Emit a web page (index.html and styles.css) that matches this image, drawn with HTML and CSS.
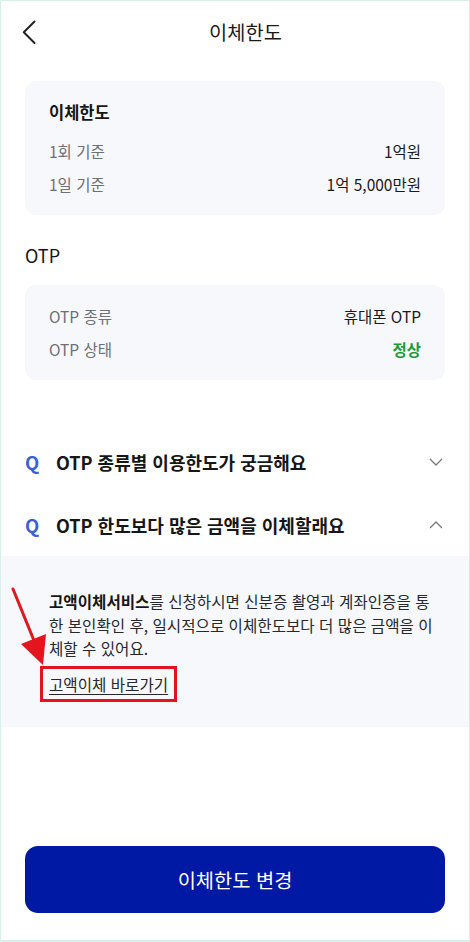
FILE: index.html
```html
<!DOCTYPE html>
<html lang="ko">
<head>
<meta charset="utf-8">
<title>이체한도</title>
<link rel="stylesheet" href="styles.css">
</head>
<body>
<div class="frame">
  <header class="topbar">
    <svg class="back" width="14" height="25" viewBox="0 0 14 25"><path d="M12.5 1.5 L1.8 12.2 L12.5 23" fill="none" stroke="#222" stroke-width="2" stroke-linecap="round" stroke-linejoin="round"/></svg>
    <h1 class="title">이체한도</h1>
    <span></span>
  </header>

  <section class="card card-limit">
    <h2 class="card-title">이체한도</h2>
    <div class="row"><span class="label">1회 기준</span><span class="value">1억원</span></div>
    <div class="row"><span class="label">1일 기준</span><span class="value">1억 5,000만원</span></div>
  </section>

  <h2 class="section-title">OTP</h2>
  <section class="card card-otp">
    <div class="row"><span class="label">OTP 종류</span><span class="value">휴대폰 OTP</span></div>
    <div class="row"><span class="label">OTP 상태</span><span class="value ok">정상</span></div>
  </section>

  <div class="faq">
    <div class="q-row">
      <span class="q">Q</span><span class="q-text">OTP 종류별 이용한도가 궁금해요</span>
      <svg class="chev" width="14" height="8" viewBox="0 0 14 8"><path d="M1 1 L7 7 L13 1" fill="none" stroke="#7a7d84" stroke-width="1.4"/></svg>
    </div>
    <div class="q-row">
      <span class="q">Q</span><span class="q-text">OTP 한도보다 많은 금액을 이체할래요</span>
      <svg class="chev" width="14" height="8" viewBox="0 0 14 8"><path d="M1 7 L7 1 L13 7" fill="none" stroke="#7a7d84" stroke-width="1.4"/></svg>
    </div>
    <div class="answer">
      <p class="answer-text"><b>고액이체서비스</b>를 신청하시면 신분증 촬영과 계좌인증을 통한 본인확인 후, 일시적으로 이체한도보다 더 많은 금액을 이체할 수 있어요.</p>
      <span class="highlight"><a class="link" href="#">고액이체 바로가기</a></span>
    </div>
  </div>

  <button class="primary" type="button">이체한도 변경</button>

  <svg class="arrow" width="60" height="90" viewBox="0 0 60 90"><line x1="12" y1="8" x2="34" y2="62" stroke="#e3161d" stroke-width="3" stroke-linecap="round"/><polygon points="42,84 20,63 45,53" fill="#e3161d"/></svg>
</div>
</body>
</html>
```

FILE: styles.css
```css
* { box-sizing: border-box; }
html, body { margin: 0; padding: 0; background: #fff; }
body {
  font-family: "Noto Sans CJK KR", "Noto Sans", sans-serif;
  color: #161616;
}
.frame {
  position: relative;
  width: 470px;
  height: 942px;
  border: 1px solid #d6f1ec;
  border-bottom-width: 2px;
  display: flex;
  flex-direction: column;
  padding-bottom: 27px;
}
.topbar {
  height: 62px;
  display: grid;
  grid-template-columns: 1fr auto 1fr;
  align-items: center;
  padding-left: 21px;
}
.back { display: block; }
.title {
  margin: 0;
  font-size: 19.8px;
  font-weight: 400;
  line-height: 24px;
  color: #1a1a1a;
}
.card {
  margin: 0 24px;
  background: #f6f8fc;
  border-radius: 11px;
  padding: 14.5px 24px;
}
.card-limit {
  margin-top: 18px;
  padding-top: 19px;
}
.card-title {
  margin: 0 0 10.5px;
  font-size: 16.5px;
  font-weight: 700;
  line-height: 24px;
}
.row {
  display: flex;
  justify-content: space-between;
  align-items: center;
  height: 33px;
  font-size: 15.5px;
}
.label { color: #6d7077; }
.value { color: #1a1a1a; }
.value.ok { color: #1b9a3c; font-weight: 700; }
.section-title {
  margin: 28px 24px 18px;
  font-size: 18px;
  font-weight: 400;
  line-height: 24px;
}
.faq { margin-top: 50px; }
.q-row {
  height: 63px;
  display: flex;
  align-items: center;
  padding: 0 26px 0 24px;
}
.q {
  width: 31px;
  font-size: 18.5px;
  font-weight: 700;
  color: #3b5fd8;
}
.q-text {
  flex: 1;
  font-size: 18px;
  font-weight: 700;
  color: #161616;
}
.chev { display: block; }
.answer {
  background: #f6f8fc;
  padding: 34px 30px 25px 48px;
}
.answer-text {
  margin: 0 0 5px;
  font-size: 15.6px;
  line-height: 23.5px;
  color: #26282c;
}
.answer-text b { font-weight: 700; color: #161616; }
.highlight {
  display: inline-block;
  margin-left: -9px;
  border: 3px solid #e3141d;
  padding: 0 6px;
  line-height: 30px;
}
.link {
  font-size: 15.6px;
  color: #26282c;
  text-decoration: underline;
  text-underline-offset: 3px;
}
.primary {
  margin: auto 24px 0;
  height: 67px;
  border: 0;
  border-radius: 13px;
  background: #0019a5;
  color: #fff;
  font-family: inherit;
  font-size: 19.8px;
  font-weight: 400;
}
.arrow {
  position: absolute;
  left: 0;
  top: 580px;
}
```
